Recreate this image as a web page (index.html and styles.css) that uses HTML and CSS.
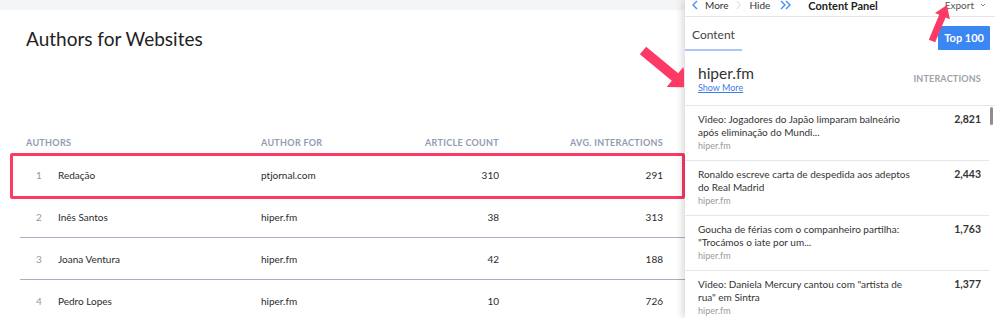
FILE: index.html
```html
<!DOCTYPE html>
<html lang="pt">
<head>
<meta charset="utf-8">
<title>Authors for Websites</title>
<link rel="stylesheet" href="styles.css">
</head>
<body>
<div class="app">
  <main class="main">
    <div class="strip"></div>
    <section class="card">
      <h1 class="title">Authors for Websites</h1>
      <div class="table">
        <div class="thead">
          <span class="th th-authors">Authors</span>
          <span class="th">Author for</span>
          <span class="th num">Article count</span>
          <span class="th num">Avg. interactions</span>
        </div>
        <div class="row row-hl">
          <span class="rank">1</span><span class="name">Redação</span><span class="site">ptjornal.com</span><span class="num">310</span><span class="num">291</span>
        </div>
        <div class="row">
          <span class="rank">2</span><span class="name">Inês Santos</span><span class="site">hiper.fm</span><span class="num">38</span><span class="num">313</span>
        </div>
        <div class="row">
          <span class="rank">3</span><span class="name">Joana Ventura</span><span class="site">hiper.fm</span><span class="num">42</span><span class="num">188</span>
        </div>
        <div class="row">
          <span class="rank">4</span><span class="name">Pedro Lopes</span><span class="site">hiper.fm</span><span class="num">10</span><span class="num">726</span>
        </div>
      </div>
    </section>
  </main>

  <aside class="panel">
    <div class="bar">
      <svg class="chev chev-blue" width="6" height="10" viewBox="0 0 6 10"><path d="M5 1 L1 5 L5 9" fill="none" stroke="currentColor" stroke-width="1.4"/></svg>
      <span class="bar-link">More</span>
      <svg class="chev chev-gray" width="5" height="10" viewBox="0 0 5 10"><path d="M1 1 L4 5 L1 9" fill="none" stroke="currentColor" stroke-width="1"/></svg>
      <span class="bar-link hide">Hide</span>
      <svg class="chev chev-blue dbl" width="11" height="10" viewBox="0 0 11 10"><path d="M1 1 L5 5 L1 9 M6 1 L10 5 L6 9" fill="none" stroke="currentColor" stroke-width="1.4"/></svg>
      <span class="bar-title">Content Panel</span>
      <span class="bar-export">Export</span>
      <svg class="chev chev-down" width="6" height="10" viewBox="0 0 6 10"><path d="M1 4 L3 6 L5 4" fill="none" stroke="currentColor" stroke-width="0.9"/></svg>
    </div>

    <div class="tabs">
      <span class="tab">Content</span>
      <span class="top-btn">Top 100</span>
    </div>

    <div class="phead">
      <div class="site-block">
        <div class="site-name">hiper.fm</div>
        <a class="show-more" href="#">Show More</a>
      </div>
      <span class="col-label">Interactions</span>
    </div>

    <ul class="list">
      <li class="item">
        <div class="item-text">
          <div class="item-title">Video: Jogadores do Japão limparam balneário após eliminação do Mundi...</div>
          <div class="item-src">hiper.fm</div>
        </div>
        <span class="item-num">2,821</span>
      </li>
      <li class="item">
        <div class="item-text">
          <div class="item-title">Ronaldo escreve carta de despedida aos adeptos do Real Madrid</div>
          <div class="item-src">hiper.fm</div>
        </div>
        <span class="item-num">2,443</span>
      </li>
      <li class="item">
        <div class="item-text">
          <div class="item-title">Goucha de férias com o companheiro partilha: "Trocámos o iate por um...</div>
          <div class="item-src">hiper.fm</div>
        </div>
        <span class="item-num">1,763</span>
      </li>
      <li class="item">
        <div class="item-text">
          <div class="item-title">Video: Daniela Mercury cantou com "artista de rua" em Sintra</div>
          <div class="item-src">hiper.fm</div>
        </div>
        <span class="item-num">1,377</span>
      </li>
    </ul>
    <span class="scroll-thumb"></span>
  </aside>
</div>

<svg class="arrow arrow-a" width="54" height="56" viewBox="630 40 54 56">
  <polygon points="639.8,54.35 671.8,80.85 666.7,87 687.3,87.2 683.3,67 678.2,73.15 646.2,46.65" fill="#fb3a66"/>
</svg>
<svg class="arrow arrow-b" width="30" height="46" viewBox="924 0 30 46">
  <polygon points="928.8,39.7 939.2,14.8 935,13 947,5 949.8,19.2 945.6,17.4 935.2,42.3" fill="#fb3a66"/>
</svg>
</body>
</html>
```

FILE: styles.css
```css
* { box-sizing: border-box; }

html, body {
  margin: 0;
  padding: 0;
}

body {
  width: 995px;
  height: 318px;
  overflow: hidden;
  position: relative;
  font-family: Lato, "Open Sans", Arial, sans-serif;
  color: #2b2b2b;
  background: #fff;
}

.app {
  display: flex;
  height: 318px;
  overflow: hidden;
}

/* ---------- main area ---------- */
.main {
  flex: 0 0 685px;
  display: flex;
  flex-direction: column;
  background: #fff;
}

.main > *,
.panel > * {
  flex-shrink: 0;
}

.strip {
  height: 10px;
  background: #f4f5f7;
}

.card {
  padding-top: 17px;
}

.title {
  margin: 0;
  padding-left: 26px;
  font-size: 19px;
  line-height: 24px;
  font-weight: 400;
  color: #222;
}

.table {
  margin-top: 81px;
  margin-left: 20px;
  width: 665px;
}

.thead,
.row {
  display: grid;
  grid-template-columns: 32px 203px 120px 118px 164px;
  padding-left: 6px;
  padding-right: 22px;
  align-items: center;
}

.thead {
  height: 22px;
}

.th {
  font-size: 9px;
  font-weight: 700;
  text-transform: uppercase;
  letter-spacing: 0.3px;
  color: #939bb3;
  line-height: 22px;
}

.th-authors {
  grid-column: span 2;
}

.num {
  text-align: right;
}

.row {
  height: 42px;
  font-size: 10px;
  border-bottom: 1px solid #a7b0c4;
  color: #2b2b2b;
}

.row-hl {
  position: relative;
  border-bottom: none;
}

.row-hl::after {
  content: "";
  position: absolute;
  top: -1px;
  left: -10px;
  right: 0;
  bottom: -3px;
  border: 3px solid #fb3a66;
  border-radius: 2px;
}

.row:last-child {
  border-bottom: none;
}

.rank {
  padding-left: 10px;
  color: #8f97a8;
}

/* ---------- side panel ---------- */
.panel {
  flex: 1;
  position: relative;
  z-index: 2;
  background: #fff;
  box-shadow: -3px 0 7px rgba(0, 0, 0, 0.14);
  display: flex;
  flex-direction: column;
}

.bar {
  height: 17px;
  display: flex;
  align-items: flex-start;
  padding-left: 7px;
  padding-right: 9px;
  border-bottom: 1px solid #e4e6ea;
  font-size: 10px;
  line-height: 10px;
}

.chev { display: block; }
.chev-blue { color: #4a8ef2; }
.chev-gray { color: #d3d7de; margin-left: 7px; }
.chev-down { color: #777; margin-left: 6px; }

.bar-link {
  margin-left: 7px;
  color: #333;
}

.bar-link.hide {
  margin-left: 9px;
}

.dbl {
  margin-left: 10px;
}

.bar-title {
  margin-left: 17px;
  font-weight: 700;
  font-size: 11px;
  line-height: 11px;
  color: #222;
}

.bar-export {
  margin-left: auto;
  color: #555;
}

.tabs {
  height: 34px;
  display: flex;
  align-items: flex-end;
  justify-content: space-between;
  padding-right: 5px;
}

.tab {
  padding: 0 7px 7px 7px;
  font-size: 12px;
  line-height: 14px;
  color: #444;
  border-bottom: 2px solid #a9c7f4;
}

.top-btn {
  margin-bottom: 1px;
  height: 24px;
  padding: 0 6px;
  line-height: 24px;
  background: #3a86f3;
  color: #fff;
  font-size: 11px;
  font-weight: 700;
  border-radius: 1px;
}

.phead {
  height: 55px;
  display: flex;
  justify-content: space-between;
  align-items: center;
  padding: 0 14px 0 13px;
  border-bottom: 1px solid #e6e7ea;
}

.site-block {
  align-self: flex-start;
  padding-top: 13px;
}

.site-name {
  font-size: 15.5px;
  line-height: 18px;
  color: #333;
}

.show-more {
  display: block;
  font-size: 9px;
  line-height: 11px;
  color: #3d7de8;
  text-decoration: underline;
}

.col-label {
  font-size: 9px;
  font-weight: 700;
  letter-spacing: 0.2px;
  text-transform: uppercase;
  color: #9da2aa;
}

.list {
  list-style: none;
  margin: 0;
  padding: 0 6px 0 0;
}

.item {
  display: flex;
  justify-content: space-between;
  padding: 7px 8px 7px 13px;
  border-bottom: 1px solid #e6e7ea;
}

.item-text {
  width: 212px;
}

.item-title {
  font-size: 10px;
  line-height: 13px;
  color: #333;
}

.item-src {
  font-size: 9px;
  line-height: 14px;
  color: #9a9a9a;
}

.item-num {
  font-size: 10.5px;
  font-weight: 700;
  line-height: 13px;
  color: #333;
}

.scroll-thumb {
  position: absolute;
  right: 2px;
  top: 107px;
  width: 3px;
  height: 18px;
  border-radius: 2px;
  background: #8d8d8d;
}

/* ---------- annotation arrows ---------- */
.arrow {
  position: absolute;
  z-index: 5;
  pointer-events: none;
}

.arrow-a {
  left: 630px;
  top: 40px;
}

.arrow-b {
  left: 924px;
  top: 0;
}
```
